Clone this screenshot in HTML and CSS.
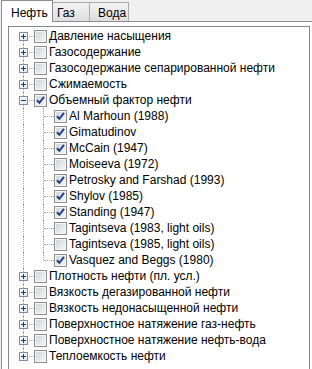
FILE: index.html
```html
<!DOCTYPE html>
<html lang="ru">
<head>
    <meta charset="UTF-8">
    <title>Свойства нефти</title>
    <link rel="stylesheet" href="styles.css">
</head>
<body>

    <div class="tabs">
        <div class="tab active tab-oil">Нефть</div>
        <div class="tab tab-gas">Газ</div>
        <div class="tab tab-water">Вода</div>
    </div>

    <div class="panel">
        <ul class="tree">
            <li><div class="row"><span class="cell first"><span class="exp plus"></span></span><span class="chk"></span><span class="label">Давление насыщения</span></div></li>
            <li><div class="row"><span class="cell tee"><span class="exp plus"></span></span><span class="chk"></span><span class="label">Газосодержание</span></div></li>
            <li><div class="row"><span class="cell tee"><span class="exp plus"></span></span><span class="chk"></span><span class="label">Газосодержание сепарированной нефти</span></div></li>
            <li><div class="row"><span class="cell tee"><span class="exp plus"></span></span><span class="chk"></span><span class="label">Сжимаемость</span></div></li>
            <li>
                <div class="row"><span class="cell tee"><span class="exp"></span></span><span class="chk on"><svg viewBox="0 0 11 11"><path d="M2 5.2 L4.4 7.8 L9 1.8"/></svg></span><span class="label">Объемный фактор нефти</span></div>
                <ul class="kids">
                    <li><div class="row"><span class="cell pipe"></span><span class="cell tee"></span><span class="chk on"><svg viewBox="0 0 11 11"><path d="M2 5.2 L4.4 7.8 L9 1.8"/></svg></span><span class="label">Al Marhoun (1988)</span></div></li>
                    <li><div class="row"><span class="cell pipe"></span><span class="cell tee"></span><span class="chk on"><svg viewBox="0 0 11 11"><path d="M2 5.2 L4.4 7.8 L9 1.8"/></svg></span><span class="label">Gimatudinov</span></div></li>
                    <li><div class="row"><span class="cell pipe"></span><span class="cell tee"></span><span class="chk on"><svg viewBox="0 0 11 11"><path d="M2 5.2 L4.4 7.8 L9 1.8"/></svg></span><span class="label">McCain (1947)</span></div></li>
                    <li><div class="row"><span class="cell pipe"></span><span class="cell tee"></span><span class="chk"></span><span class="label">Moiseeva (1972)</span></div></li>
                    <li><div class="row"><span class="cell pipe"></span><span class="cell tee"></span><span class="chk on"><svg viewBox="0 0 11 11"><path d="M2 5.2 L4.4 7.8 L9 1.8"/></svg></span><span class="label">Petrosky and Farshad (1993)</span></div></li>
                    <li><div class="row"><span class="cell pipe"></span><span class="cell tee"></span><span class="chk on"><svg viewBox="0 0 11 11"><path d="M2 5.2 L4.4 7.8 L9 1.8"/></svg></span><span class="label">Shylov (1985)</span></div></li>
                    <li><div class="row"><span class="cell pipe"></span><span class="cell tee"></span><span class="chk on"><svg viewBox="0 0 11 11"><path d="M2 5.2 L4.4 7.8 L9 1.8"/></svg></span><span class="label">Standing (1947)</span></div></li>
                    <li><div class="row"><span class="cell pipe"></span><span class="cell tee"></span><span class="chk"></span><span class="label">Tagintseva (1983, light oils)</span></div></li>
                    <li><div class="row"><span class="cell pipe"></span><span class="cell tee"></span><span class="chk"></span><span class="label">Tagintseva (1985, light oils)</span></div></li>
                    <li><div class="row"><span class="cell pipe"></span><span class="cell ell"></span><span class="chk on"><svg viewBox="0 0 11 11"><path d="M2 5.2 L4.4 7.8 L9 1.8"/></svg></span><span class="label">Vasquez and Beggs (1980)</span></div></li>
                </ul>
            </li>
            <li><div class="row"><span class="cell tee"><span class="exp plus"></span></span><span class="chk"></span><span class="label">Плотность нефти (пл. усл.)</span></div></li>
            <li><div class="row"><span class="cell tee"><span class="exp plus"></span></span><span class="chk"></span><span class="label">Вязкость дегазированной нефти</span></div></li>
            <li><div class="row"><span class="cell tee"><span class="exp plus"></span></span><span class="chk"></span><span class="label">Вязкость недонасыщенной нефти</span></div></li>
            <li><div class="row"><span class="cell tee"><span class="exp plus"></span></span><span class="chk"></span><span class="label">Поверхностное натяжение газ-нефть</span></div></li>
            <li><div class="row"><span class="cell tee"><span class="exp plus"></span></span><span class="chk"></span><span class="label">Поверхностное натяжение нефть-вода</span></div></li>
            <li><div class="row"><span class="cell ell"><span class="exp plus"></span></span><span class="chk"></span><span class="label">Теплоемкость нефти</span></div></li>
        </ul>
    </div>

</body>
</html>
```

FILE: styles.css
```css
* {
    padding: 0;
    margin: 0;
    box-sizing: border-box;
}
html, body {
    height: 369px;
    overflow: hidden;
}
body {
    background: #f0f0f0;
    font-family: "Liberation Sans", Arial, sans-serif;
    font-size: 12px;
    color: #000;
}

/* tab strip */
.tabs {
    display: flex;
    align-items: flex-end;
    height: 21px;
}
.tab {
    height: 19px;
    padding-top: 3px;
    line-height: 14px;
    border: 1px solid #acacac;
    border-bottom: none;
    background: linear-gradient(#f3f3f3, #e8e8e8 50%, #dedede);
    white-space: nowrap;
}
.tab.active {
    position: relative;
    z-index: 1;
    height: 22px;
    margin-bottom: -1px;
    padding-top: 5px;
    border-color: #898c95;
    background: #ffffff;
}
.tab-oil {
    width: 52px;
    margin-left: 1px;
    padding-left: 9px;
}
.tab-gas {
    width: 38px;
    margin-left: -1px;
    padding-left: 4px;
}
.tab-water {
    width: 40px;
    margin-left: -1px;
    padding-left: 8px;
}

/* page under the tabs, cut by the window edge */
.panel {
    margin-left: 1px;
    padding: 4px 0 0 6px;
    height: 348px;
    overflow: hidden;
    border-top: 1px solid #898c95;
    border-left: 1px solid #898c95;
    background: #ffffff;
}

/* tree view */
.tree {
    width: 302px;
    height: 360px;
    padding: 1px 0 0 5px;
    border: 1px solid #828790;
    background: #ffffff;
    list-style: none;
}
.tree ul {
    list-style: none;
}
.row {
    display: flex;
    height: 16px;
    line-height: 16px;
}
.cell {
    position: relative;
    flex: none;
    width: 20px;
    height: 16px;
}
.cell::before {
    content: '';
    position: absolute;
    left: 9px;
    top: 0;
    bottom: 0;
    border-left: 1px dotted #a0a0a0;
}
.cell::after {
    content: '';
    position: absolute;
    left: 10px;
    right: 0;
    top: 8px;
    border-top: 1px dotted #a0a0a0;
}
.cell.first::before { top: 8px; }
.cell.ell::before { bottom: 8px; }
.cell.pipe::after { display: none; }

/* expand / collapse box */
.exp {
    position: absolute;
    z-index: 1;
    left: 5px;
    top: 4px;
    width: 9px;
    height: 9px;
    border: 1px solid #7a90ac;
    background: linear-gradient(135deg, #ffffff, #e2e6ec);
}
.exp::before {
    content: '';
    position: absolute;
    left: 1px;
    top: 3px;
    width: 5px;
    height: 1px;
    background: #1e3668;
}
.exp.plus::after {
    content: '';
    position: absolute;
    left: 3px;
    top: 1px;
    width: 1px;
    height: 5px;
    background: #1e3668;
}

/* check boxes */
.chk {
    flex: none;
    width: 13px;
    height: 13px;
    margin-top: 2px;
    border: 1px solid #8e8f8f;
    background: linear-gradient(135deg, #d2d4d8, #f6f6f6);
    box-shadow: inset 0 0 0 1px #f4f4f4;
}
.chk svg {
    display: block;
    width: 11px;
    height: 11px;
}
.chk svg path {
    fill: none;
    stroke: #23408c;
    stroke-width: 2;
}
.label {
    margin-left: 2px;
    white-space: nowrap;
}
```
